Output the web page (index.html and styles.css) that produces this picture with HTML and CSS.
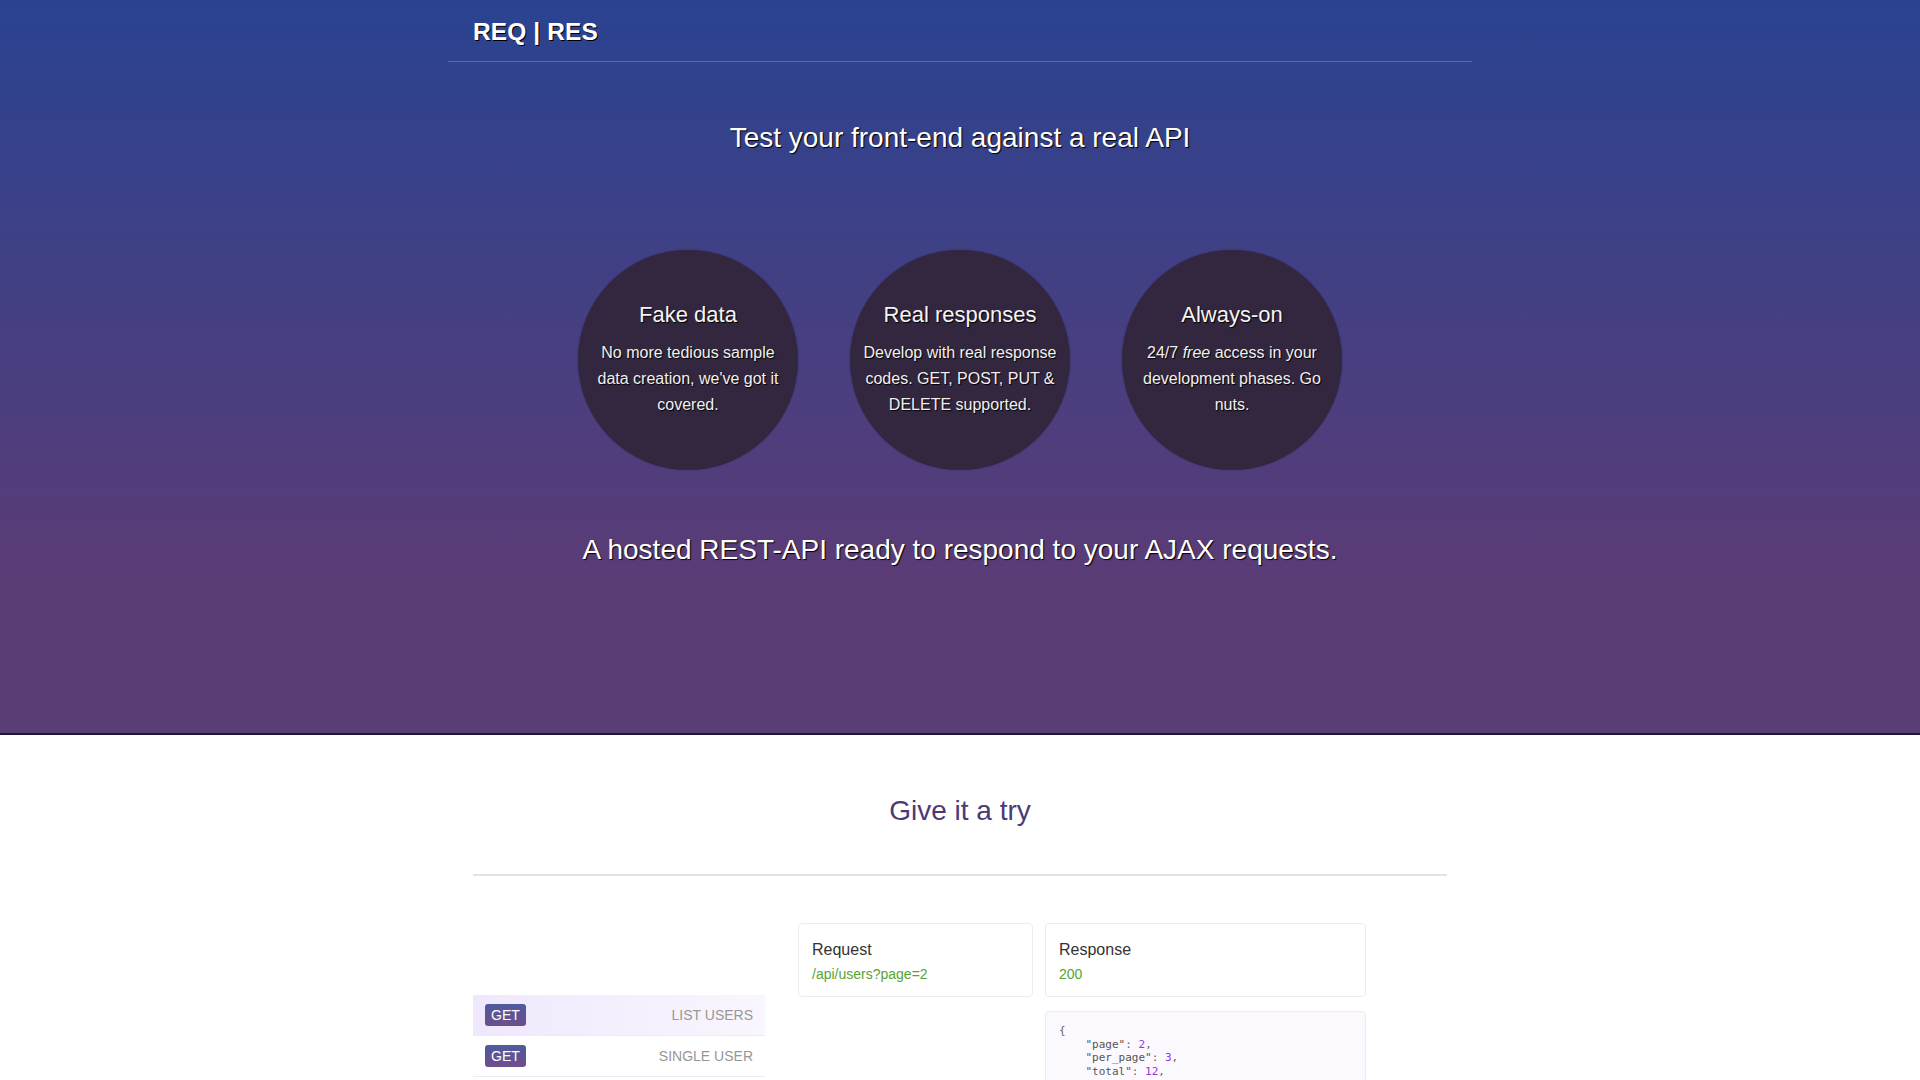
FILE: index.html
```html
<!DOCTYPE html>
<html lang="en">
<head>
<meta charset="utf-8">
<title>Reqres - A hosted REST-API ready to respond to your AJAX requests</title>
<link rel="stylesheet" href="styles.css">
</head>
<body>
<section class="hero">
  <header class="site-header">
    <div class="logo">REQ | RES</div>
  </header>
  <h2 class="tagline tagline-top">Test your front-end against a real API</h2>
  <div class="features">
    <div class="feature">
      <h3 class="feature-title">Fake data</h3>
      <p class="feature-text">No more tedious sample data creation, we've got it covered.</p>
    </div>
    <div class="feature">
      <h3 class="feature-title">Real responses</h3>
      <p class="feature-text">Develop with real response codes. GET, POST, PUT &amp; DELETE supported.</p>
    </div>
    <div class="feature">
      <h3 class="feature-title">Always-on</h3>
      <p class="feature-text">24/7 <em>free</em> access in your development phases. Go nuts.</p>
    </div>
  </div>
  <h2 class="tagline tagline-bottom">A hosted REST-API ready to respond to your AJAX requests.</h2>
</section>

<section class="try">
  <div class="container">
    <h2 class="try-title">Give it a try</h2>
    <hr class="divider">
    <div class="console">
      <ul class="endpoints">
        <li class="endpoint active"><span class="method">GET</span><span class="ep-name">List users</span></li>
        <li class="endpoint"><span class="method">GET</span><span class="ep-name">Single user</span></li>
        <li class="endpoint"><span class="method">GET</span><span class="ep-name">Single user not found</span></li>
        <li class="endpoint"><span class="method">GET</span><span class="ep-name">List &lt;resource&gt;</span></li>
      </ul>
      <div class="request">
        <div class="panel">
          <div class="panel-label">Request</div>
          <div class="panel-value">/api/users?page=2</div>
        </div>
      </div>
      <div class="response">
        <div class="panel">
          <div class="panel-label">Response</div>
          <div class="panel-value">200</div>
        </div>
        <pre class="code"><span class="p">{</span>
    <span class="s">"page"</span><span class="p">:</span> <span class="n">2</span><span class="p">,</span>
    <span class="s">"per_page"</span><span class="p">:</span> <span class="n">3</span><span class="p">,</span>
    <span class="s">"total"</span><span class="p">:</span> <span class="n">12</span><span class="p">,</span>
    <span class="s">"total_pages"</span><span class="p">:</span> <span class="n">4</span><span class="p">,</span>
    <span class="s">"data"</span><span class="p">: [</span>
        <span class="p">{</span>
            <span class="s">"id"</span><span class="p">:</span> <span class="n">4</span><span class="p">,</span></pre>
      </div>
    </div>
  </div>
</section>
</body>
</html>
```
FILE: styles.css
```css
* { box-sizing: border-box; }
html, body { margin: 0; padding: 0; }
body {
  font-family: "Liberation Sans", Arial, sans-serif;
  color: #333;
  background: #fff;
}

.hero {
  height: 735px;
  background: linear-gradient(to bottom, #2a4391 0%, #5a3c77 78%, #5a3c77 100%);
  border-bottom: 2px solid #1e1731;
  color: #fff;
}

.site-header {
  width: 1024px;
  margin: 0 auto;
  height: 62px;
  border-bottom: 1px solid #5a6bb3;
  padding: 18px 25px 0;
}

.logo {
  font-size: 24.5px;
  font-weight: bold;
  letter-spacing: 0.1px;
  text-shadow: 1px 1px 0 #000;
  line-height: 28px;
}

.tagline {
  margin: 0;
  font-weight: normal;
  text-align: center;
  font-size: 28px;
  line-height: 33px;
  text-shadow: 1px 1px 1px #000;
}
.tagline-top { padding-top: 59px; }
.tagline-bottom { padding-top: 63px; }

.features {
  display: flex;
  justify-content: center;
  gap: 52px;
  margin-top: 96px;
}

.feature {
  width: 220px;
  height: 220px;
  border-radius: 50%;
  background: #33273f;
  display: flex;
  flex-direction: column;
  justify-content: center;
  align-items: center;
  text-align: center;
  padding: 0 8px;
  box-shadow: 0 0 2px rgba(0,0,0,0.3);
}

.feature-title {
  margin: 0 0 13px;
  font-size: 22px;
  font-weight: normal;
  line-height: 24px;
  color: #f4f4f4;
  text-shadow: 1px 1px 1px #000;
}

.feature-text {
  margin: 0;
  font-size: 16px;
  line-height: 26px;
  color: #f0f0f0;
  text-shadow: 1px 1px 1px #000;
}

.try { background: #fff; }

.container {
  width: 1024px;
  margin: 0 auto;
  padding: 0 25px;
}

.try-title {
  margin: 60px 0 0;
  text-align: center;
  font-weight: normal;
  font-size: 28px;
  line-height: 32px;
  color: #4b3a78;
}

.divider {
  margin: 47px 0 0;
  border: 0;
  border-top: 2px solid #e3e3e3;
  height: 0;
}

.console {
  display: flex;
  align-items: flex-start;
  margin-top: 47px;
}

.endpoints {
  list-style: none;
  margin: 72px 0 0;
  padding: 0;
  width: 292px;
  flex: none;
}

.endpoint {
  display: flex;
  align-items: center;
  justify-content: space-between;
  height: 41px;
  padding: 0 12px 0 12px;
  border-bottom: 1px solid #eee9f8;
}
.endpoint.active {
  background: linear-gradient(to right, #efe8fc 0%, #f9f6fe 100%);
}

.method {
  display: inline-block;
  width: 41px;
  height: 22px;
  line-height: 22px;
  text-align: center;
  color: #fff;
  font-size: 14px;
  border-radius: 3px;
  background: linear-gradient(to bottom, #4d5b9e, #6f4e8a);
}

.ep-name {
  text-transform: uppercase;
  font-size: 14px;
  color: #979797;
}

.request {
  width: 235px;
  margin-left: 33px;
  flex: none;
}
.response {
  width: 321px;
  margin-left: 12px;
  flex: none;
}

.panel {
  height: 74px;
  border: 1px solid #ececec;
  border-radius: 4px;
  padding: 16px 13px 0;
}
.panel-label {
  font-size: 16px;
  line-height: 20px;
  color: #333;
}
.panel-value {
  margin-top: 4px;
  font-size: 14px;
  line-height: 20px;
  color: #58a32f;
}

.code {
  margin: 14px 0 0;
  border: 1px solid #eeeaf4;
  border-radius: 4px;
  background: #fbf9fe;
  padding: 12px 13px;
  font-family: "DejaVu Sans Mono", "Liberation Mono", monospace;
  font-size: 11px;
  line-height: 13.7px;
  color: #555;
  height: 200px;
  overflow: hidden;
}
.code .p { color: #666; }
.code .s { color: #555; }
.code .n { color: #8c3bd8; }
```
